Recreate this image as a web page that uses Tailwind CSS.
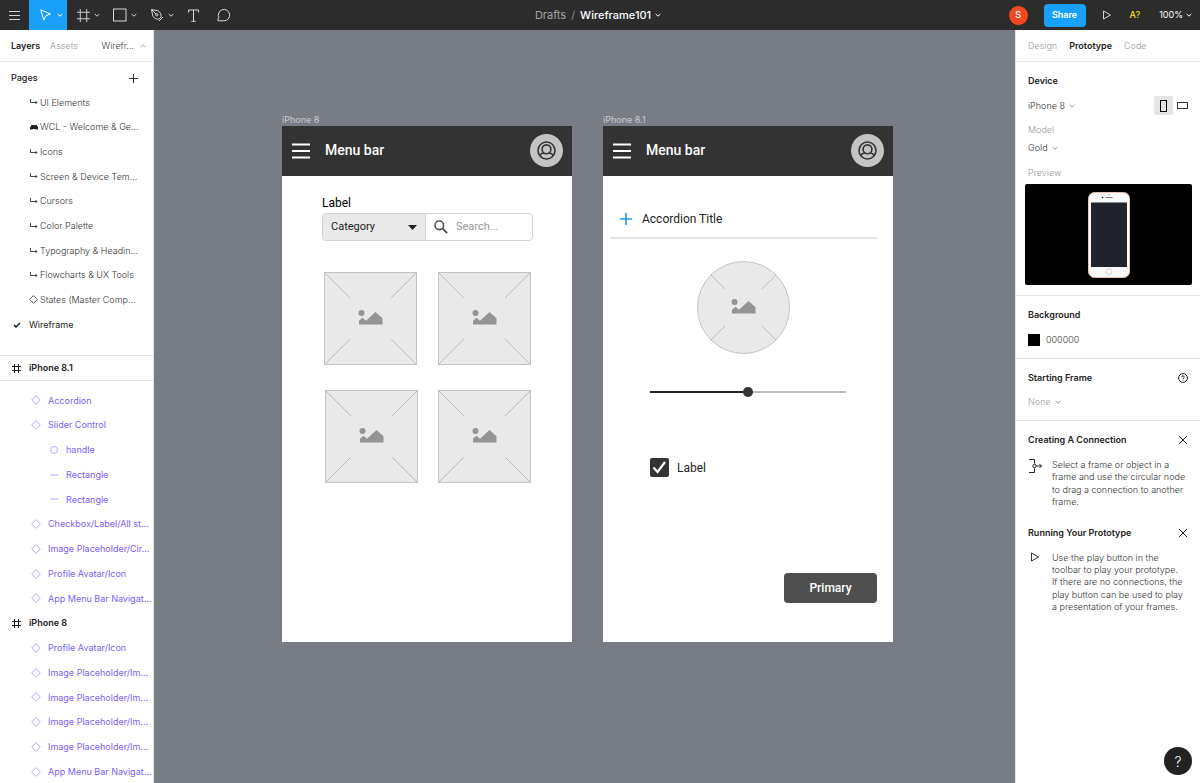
<!DOCTYPE html>
<html lang="en">
<head>
  <meta charset="UTF-8">
  <meta name="viewport" content="width=device-width, initial-scale=1.0">
  <title>Wireframe101</title>
  <script src="https://cdn.jsdelivr.net/npm/@tailwindcss/browser@4"></script>
</head>
<body class="h-screen flex flex-col overflow-hidden bg-[#787c85] font-['Inter',sans-serif] text-[9px] text-[#333]">

  <!-- Shared icons -->
  <svg class="hidden">
    <symbol id="chevron" viewBox="0 0 6 6"><path d="M.7 2 3 4.2 5.300 2" fill="none" stroke="currentColor"/></symbol>
    <symbol id="arrow" viewBox="0 0 8 8"><path d="M.5 1v3.500H7M5.500 3 7 4.500 5.500 6" fill="none" stroke="currentColor" stroke-width=".9"/></symbol>
    <symbol id="diamond" viewBox="0 0 10 10"><path d="M5 .7 9.300 5 5 9.300.7 5z" fill="none" stroke="currentColor" stroke-width=".9"/></symbol>
    <symbol id="frame" viewBox="0 0 14 14"><path d="M3.500 0v14M10.500 0v14M0 3.500h14M0 10.500h14" fill="none" stroke="currentColor"/></symbol>
    <symbol id="frame-small" viewBox="0 0 9 9"><path d="M2.500 0v9M6.500 0v9M0 2.500h9M0 6.500h9" fill="none" stroke="currentColor"/></symbol>
    <symbol id="close" viewBox="0 0 10 10"><path d="m1 1 8 8M9 1 1 9" fill="none" stroke="currentColor"/></symbol>
    <symbol id="play" viewBox="0 0 10 10"><path d="M1.500 1 8.500 5l-7 4z" fill="none" stroke="currentColor"/></symbol>
    <symbol id="burger" viewBox="0 0 18 16"><path d="M0 1.500h18M0 8h18M0 14.500h18" stroke="currentColor" stroke-width="2"/></symbol>
    <symbol id="avatar" viewBox="0 0 33 33">
      <circle cx="16.500" cy="16.500" r="16.500" fill="#c4c4c4"/>
      <g fill="none" stroke="#333" stroke-width="1.600">
        <circle cx="16.500" cy="16.500" r="8.500"/>
        <circle cx="16.500" cy="15.300" r="4.400"/>
        <path d="M9.800 21.500c1-1.600 2.300-2.400 4.200-2.700M23.200 21.500c-1-1.600-2.300-2.400-4.200-2.700"/>
      </g>
    </symbol>
    <symbol id="picture" viewBox="0 0 24 15"><circle cx="3" cy="3" r="3" fill="#949494"/><path d="M.5 14.500v-3.700L4 7.800l3.500 3L17 2l7 6.200v6.300z" fill="#949494"/></symbol>
    <symbol id="placeholder" viewBox="0 0 93 93">
      <rect x=".5" y=".5" width="92" height="92" fill="#e9e9e9" stroke="#c4c4c4"/>
      <path d="m1 1 25 25M92 1 67 26M1 92l25-25M92 92 67 67" stroke="#bdbdbd"/>
      <use href="#picture" x="34" y="38" width="25" height="15"/>
    </symbol>
  </svg>

  <!-- Toolbar -->
  <header class="h-[30px] shrink-0 grid grid-cols-[1fr_auto_1fr] items-center bg-[#2c2c2c] text-[#d6d6d6]">
    <div class="flex h-full">
      <button aria-label="Menu" class="w-[29px] flex items-center justify-center">
        <svg class="w-[11px] h-[11px]" viewBox="0 0 11 11"><path d="M0 1.500h11M0 5.500h11M0 9.500h11" stroke="currentColor"/></svg>
      </button>
      <button aria-label="Move" class="w-[38px] pl-[10px] flex items-center gap-1 bg-[#18a0fb] text-white">
        <svg class="size-[14px]" viewBox="0 0 14 14"><path d="M1.800 1.800 11.500 6 7 7.700 4.800 12z" fill="none" stroke="currentColor"/></svg>
        <svg class="size-[6px]"><use href="#chevron"/></svg>
      </button>
      <button aria-label="Frame" class="w-[37px] pl-[10px] flex items-center gap-1">
        <svg class="size-[13px]"><use href="#frame"/></svg>
        <svg class="size-[6px]"><use href="#chevron"/></svg>
      </button>
      <button aria-label="Shape" class="w-[37px] pl-[9px] flex items-center gap-1">
        <svg class="size-[14px]" viewBox="0 0 14 14"><rect x=".5" y="1" width="12.500" height="12" fill="none" stroke="currentColor"/></svg>
        <svg class="size-[6px]"><use href="#chevron"/></svg>
      </button>
      <button aria-label="Pen" class="w-[37px] pl-[9px] flex items-center gap-1">
        <svg class="size-[14px]" viewBox="0 0 14 14"><path d="M1.500 1.500 8 2.800c2.200 1.200 3.200 3.300 3.200 6L8.800 11.200c-2.700 0-4.800-1-6-3.200zM1.500 1.500 6 6M9 13l4-4" fill="none" stroke="currentColor"/><circle cx="6.800" cy="6.800" r="1.200" fill="none" stroke="currentColor"/></svg>
        <svg class="size-[6px]"><use href="#chevron"/></svg>
      </button>
      <button aria-label="Text" class="w-[30px] flex items-center justify-center">
        <svg class="size-[13px]" viewBox="0 0 13 13"><path d="M1.500 3.500v-2.500h10v2.500M6.500 1v11.500M4.300 12.300h4.400" fill="none" stroke="currentColor"/></svg>
      </button>
      <button aria-label="Comment" class="w-[31px] flex items-center justify-center">
        <svg class="size-[14px]" viewBox="0 0 14 14"><path d="M1 12.800V10.500L2 9.800a5.700 5.700 0 1 1 5 3z" fill="none" stroke="currentColor"/></svg>
      </button>
    </div>
    <div class="flex items-center gap-[5px] pr-1 text-[11px]">
      <a href="#" class="text-[#a3a3a3]">Drafts</a>
      <span class="text-[#8a8a8a]">/</span>
      <button class="flex items-center gap-1 font-medium text-white">Wireframe101 <svg class="size-[6px]"><use href="#chevron"/></svg></button>
    </div>
    <div class="flex items-center justify-end pr-2">
      <span class="size-[19px] rounded-full bg-[#f24822] text-white font-medium flex items-center justify-center mr-4">S</span>
      <button class="w-[42px] h-[23px] rounded bg-[#18a0fb] text-white font-semibold mr-4">Share</button>
      <button aria-label="Play" class="mr-[18px]"><svg class="size-[10px]"><use href="#play"/></svg></button>
      <button class="text-[#f5e50a] font-medium mr-[19px]">A?</button>
      <button class="flex items-center gap-[3px] text-white">100% <svg class="size-[6px]"><use href="#chevron"/></svg></button>
    </div>
  </header>

  <div class="flex flex-1 min-h-0">

    <!-- Layers panel -->
    <aside class="w-[154px] shrink-0 flex flex-col bg-white border-r border-[#e5e5e5] font-light overflow-hidden">
      <div class="h-8 shrink-0 flex items-center px-[11px] border-b border-[#e5e5e5]">
        <button class="font-semibold text-[#222]">Layers</button>
        <button class="ml-[10px] text-[#999]">Assets</button>
        <button class="ml-auto -mr-1 flex items-center gap-[6px]">Wirefr... <svg class="size-[6px] rotate-180 text-[#999]"><use href="#chevron"/></svg></button>
      </div>
      <div class="h-7 shrink-0 flex items-center justify-between pl-[11px] pr-[15px] pt-1">
        <h2 class="font-medium text-[#222]">Pages</h2>
        <button aria-label="Add page"><svg class="size-[9px]" viewBox="0 0 9 9"><path d="M4.500 0v9M0 4.500h9" stroke="currentColor"/></svg></button>
      </div>
      <ul class="h-[247px] shrink-0 grid auto-rows-fr items-center">
        <li class="flex items-center gap-[2px] pl-[30px]"><svg class="size-2"><use href="#arrow"/></svg>UI Elements</li>
        <li class="flex items-center gap-[2px] pl-[30px]"><svg class="size-2" viewBox="0 0 8 8"><path d="M0 4.500 1.500 2h2l.5.500.500-.5h2L8 4v2.500H5.500L5 6H3l-.5.500H0z" fill="#222"/></svg>WCL - Welcome &amp; Ge...</li>
        <li class="flex items-center gap-[2px] pl-[30px]"><svg class="size-2"><use href="#arrow"/></svg>Icons</li>
        <li class="flex items-center gap-[2px] pl-[30px]"><svg class="size-2"><use href="#arrow"/></svg>Screen &amp; Device Tem...</li>
        <li class="flex items-center gap-[2px] pl-[30px]"><svg class="size-2"><use href="#arrow"/></svg>Cursors</li>
        <li class="flex items-center gap-[2px] pl-[30px]"><svg class="size-2"><use href="#arrow"/></svg>Color Palette</li>
        <li class="flex items-center gap-[2px] pl-[30px]"><svg class="size-2"><use href="#arrow"/></svg>Typography &amp; Headin...</li>
        <li class="flex items-center gap-[2px] pl-[30px]"><svg class="size-2"><use href="#arrow"/></svg>Flowcharts &amp; UX Tools</li>
        <li class="flex items-center gap-[2px] pl-[29px]"><svg class="size-[9px]"><use href="#diamond"/></svg>States (Master Comp...</li>
        <li class="flex items-center gap-2 pl-[13px] font-normal text-[#222]"><svg class="size-2" viewBox="0 0 8 8"><path d="m1 4 2 2 4-4" fill="none" stroke="#111" stroke-width="1.400"/></svg>Wireframe</li>
      </ul>
      <div class="h-[26px] shrink-0 mt-[18px] flex items-center gap-2 pl-3 border-y border-[#e5e5e5] font-semibold text-[#222]">
        <svg class="size-[9px]"><use href="#frame-small"/></svg>iPhone 8.1
      </div>
      <ul class="h-[396px] shrink-0 mt-[7px] grid auto-rows-fr items-center text-[#7b61ff] font-normal">
        <li class="flex items-center gap-[7px] pl-[31px]"><svg class="size-[10px] opacity-60"><use href="#diamond"/></svg>Accordion</li>
        <li class="flex items-center gap-[7px] pl-[31px]"><svg class="size-[10px] opacity-60"><use href="#diamond"/></svg>Slider Control</li>
        <li class="flex items-center gap-2 pl-[50px]"><svg class="size-[8px] opacity-60" viewBox="0 0 8 8"><circle cx="4" cy="4" r="3.500" fill="none" stroke="currentColor" stroke-width=".9"/></svg>handle</li>
        <li class="flex items-center gap-2 pl-[50px]"><svg class="size-[8px] opacity-50" viewBox="0 0 8 8"><path d="M0 4h8" stroke="currentColor"/></svg>Rectangle</li>
        <li class="flex items-center gap-2 pl-[50px]"><svg class="size-[8px] opacity-50" viewBox="0 0 8 8"><path d="M0 4h8" stroke="currentColor"/></svg>Rectangle</li>
        <li class="flex items-center gap-[7px] pl-[31px]"><svg class="size-[10px] opacity-60"><use href="#diamond"/></svg>Checkbox/Label/All st...</li>
        <li class="flex items-center gap-[7px] pl-[31px]"><svg class="size-[10px] opacity-60"><use href="#diamond"/></svg>Image Placeholder/Cir...</li>
        <li class="flex items-center gap-[7px] pl-[31px]"><svg class="size-[10px] opacity-60"><use href="#diamond"/></svg>Profile Avatar/Icon</li>
        <li class="flex items-center gap-[7px] pl-[31px]"><svg class="size-[10px] opacity-60"><use href="#diamond"/></svg>App Menu Bar Navigat...</li>
        <li class="flex items-center gap-2 pl-3 font-semibold text-[#222]"><svg class="size-[9px]"><use href="#frame-small"/></svg>iPhone 8</li>
        <li class="flex items-center gap-[7px] pl-[31px]"><svg class="size-[10px] opacity-60"><use href="#diamond"/></svg>Profile Avatar/Icon</li>
        <li class="flex items-center gap-[7px] pl-[31px]"><svg class="size-[10px] opacity-60"><use href="#diamond"/></svg>Image Placeholder/Im...</li>
        <li class="flex items-center gap-[7px] pl-[31px]"><svg class="size-[10px] opacity-60"><use href="#diamond"/></svg>Image Placeholder/Im...</li>
        <li class="flex items-center gap-[7px] pl-[31px]"><svg class="size-[10px] opacity-60"><use href="#diamond"/></svg>Image Placeholder/Im...</li>
        <li class="flex items-center gap-[7px] pl-[31px]"><svg class="size-[10px] opacity-60"><use href="#diamond"/></svg>Image Placeholder/Im...</li>
        <li class="flex items-center gap-[7px] pl-[31px]"><svg class="size-[10px] opacity-60"><use href="#diamond"/></svg>App Menu Bar Navigat...</li>
      </ul>
    </aside>

    <!-- Canvas -->
    <main class="flex-1 min-w-0 flex items-start justify-center gap-[31px] pt-[84px] pl-[6px] overflow-hidden">

      <!-- iPhone 8 -->
      <section class="w-[290px] shrink-0">
        <h3 class="h-3 leading-3 text-[#c9cbcf]">iPhone 8</h3>
        <div class="h-[516px] bg-white font-['Roboto',sans-serif] text-[#222]">
          <div class="h-[50px] flex items-center pl-[10px] pr-[9px] pb-px bg-[#333] text-white">
            <svg class="w-[18px] h-4"><use href="#burger"/></svg>
            <span class="ml-[15px] text-[14px] font-medium">Menu bar</span>
            <svg class="size-[33px] ml-auto"><use href="#avatar"/></svg>
          </div>
          <div class="pl-10 pr-[39px] pt-5">
            <label for="search" class="block text-[12px] leading-[14px] text-black">Label</label>
            <div class="mt-[3px] h-7 flex rounded border border-[#d4d4d4] overflow-hidden">
              <div class="relative w-[103px] shrink-0 border-r border-[#d4d4d4]">
                <select aria-label="Category" class="appearance-none w-full h-full pl-2 bg-[#e9e9e9] text-[11px]">
                  <option>Category</option>
                </select>
                <svg class="absolute right-2 top-[11px] w-[9px] h-[5px] pointer-events-none" viewBox="0 0 9 5"><path d="M0 0h9L4.500 5z" fill="#222"/></svg>
              </div>
              <div class="flex flex-1 min-w-0 items-center gap-2 pl-2">
                <svg class="size-[14px] shrink-0" viewBox="0 0 14 14"><circle cx="5.300" cy="5.300" r="4.300" fill="none" stroke="#555" stroke-width="1.600"/><path d="m8.500 8.500 4.700 4.700" stroke="#555" stroke-width="1.900"/></svg>
                <input id="search" type="text" placeholder="Search..." class="w-full min-w-0 text-[11px] outline-none placeholder:text-[#999]">
              </div>
            </div>
          </div>
          <div class="grid grid-cols-[93px_93px] gap-x-5 gap-y-[25px] pl-[42px] pt-[31px]">
            <svg class="size-[93px]"><use href="#placeholder"/></svg>
            <svg class="size-[93px] ml-px"><use href="#placeholder"/></svg>
            <svg class="size-[93px] ml-px"><use href="#placeholder"/></svg>
            <svg class="size-[93px] ml-px"><use href="#placeholder"/></svg>
          </div>
        </div>
      </section>

      <!-- iPhone 8.1 -->
      <section class="w-[290px] shrink-0">
        <h3 class="h-3 leading-3 text-[#c9cbcf]">iPhone 8.1</h3>
        <div class="h-[516px] bg-white font-['Roboto',sans-serif] text-[#222]">
          <div class="h-[50px] flex items-center pl-[10px] pr-[9px] pb-px bg-[#333] text-white">
            <svg class="w-[18px] h-4"><use href="#burger"/></svg>
            <span class="ml-[15px] text-[14px] font-medium">Menu bar</span>
            <svg class="size-[33px] ml-auto"><use href="#avatar"/></svg>
          </div>
          <div class="ml-[7px] mr-4 mt-6 border-b-2 border-[#e3e3e3]">
            <button class="h-[37px] flex items-center gap-[10px] pl-[10px] text-[12px]">
              <svg class="size-3" viewBox="0 0 12 12"><path d="M6 0v12M0 6h12" stroke="#2196f3" stroke-width="1.600"/></svg>
              Accordion Title
            </button>
          </div>
          <svg class="size-[93px] ml-[94px] mt-[22px]" viewBox="0 0 93 93">
            <circle cx="46.500" cy="46.500" r="46" fill="#e9e9e9" stroke="#c4c4c4"/>
            <path d="m14 14 14 14M79 14 65 28M14 79l14-14M79 79 65 65" stroke="#bdbdbd"/>
            <use href="#picture" x="34" y="38" width="25" height="15"/>
          </svg>
          <input type="range" aria-label="Slider" value="50" class="block appearance-none w-[196px] h-[2px] ml-[47px] mt-[37px] bg-linear-to-r from-[#222] from-50% to-[#bdbdbd] to-50% [&::-webkit-slider-thumb]:appearance-none [&::-webkit-slider-thumb]:size-[10px] [&::-webkit-slider-thumb]:rounded-full [&::-webkit-slider-thumb]:bg-[#333]">
          <label class="flex items-center gap-2 ml-[47px] mt-[65px] h-[19px] text-[12px]">
            <span class="relative size-[19px]">
              <input type="checkbox" checked class="block appearance-none size-[19px] rounded-xs bg-[#333]">
              <svg class="absolute inset-0 size-[19px] pointer-events-none" viewBox="0 0 19 19"><path d="m3.500 9.500 4 4.500 7.500-10" fill="none" stroke="#fff" stroke-width="2.200"/></svg>
            </span>
            Label
          </label>
          <button class="block w-[93px] h-[30px] ml-auto mr-4 mt-24 rounded bg-[#4f4f4f] text-white text-[12px] font-medium">Primary</button>
        </div>
      </section>
    </main>

    <!-- Prototype panel -->
    <aside class="w-[185px] shrink-0 bg-white border-l border-[#e5e5e5] font-light overflow-hidden">
      <nav class="h-8 flex items-center gap-3 pl-3 border-b border-[#e5e5e5]">
        <button class="text-[#999]">Design</button>
        <button class="font-semibold text-[#222]">Prototype</button>
        <button class="text-[#999]">Code</button>
      </nav>

      <section class="h-[234px] pl-3 pt-3 border-b border-[#e5e5e5]">
        <h2 class="leading-[14px] font-semibold text-[#222]">Device</h2>
        <div class="mt-2 flex items-center h-[19px] pr-2">
          <button class="flex items-center gap-1">iPhone 8 <svg class="size-[6px] text-[#999]"><use href="#chevron"/></svg></button>
          <button aria-label="Portrait" class="ml-auto size-[19px] bg-[#e5e5e5] rounded-xs flex items-center justify-center"><span class="w-[7px] h-3 border border-black"></span></button>
          <button aria-label="Landscape" class="w-[19px] h-[19px] flex items-center justify-center"><span class="w-[11px] h-[7px] border border-[#333]"></span></button>
        </div>
        <p class="mt-2 leading-[14px] text-[#999]">Model</p>
        <button class="mt-1 h-[14px] flex items-center gap-1">Gold <svg class="size-[6px] text-[#999]"><use href="#chevron"/></svg></button>
        <p class="mt-[11px] leading-[14px] text-[#999]">Preview</p>
        <div class="-ml-[3px] mr-2 mt-1 h-[101px] rounded-xs bg-black flex items-center justify-center">
          <svg class="w-[42px] h-[86px]" viewBox="0 0 42 86">
            <rect x=".5" y=".5" width="41" height="85" rx="6" fill="#fafafa" stroke="#e9c3b0"/>
            <rect x="3" y="10.500" width="36" height="64.500" fill="#20232c"/>
            <path d="M17.500 5.500h7" stroke="#777"/>
            <circle cx="14.500" cy="5.500" r=".8" fill="#222"/>
            <circle cx="21" cy="2.800" r=".5" fill="#555"/>
            <circle cx="21" cy="79.500" r="3" fill="none" stroke="#e6c4b8" stroke-width=".8"/>
          </svg>
        </div>
      </section>

      <section class="h-[63px] pl-3 pt-3 border-b border-[#e5e5e5]">
        <h2 class="leading-[14px] font-semibold text-[#222]">Background</h2>
        <div class="mt-[11px] flex items-center gap-[6px]"><span class="size-3 bg-black"></span>000000</div>
      </section>

      <section class="h-[62px] pl-3 pt-3 border-b border-[#e5e5e5]">
        <h2 class="h-[14px] pr-3 flex items-center justify-between font-semibold text-[#222]">Starting Frame
          <svg class="size-[10px]" viewBox="0 0 10 10"><circle cx="5" cy="5" r="4.400" fill="none" stroke="#222"/><path d="M3.700 4.100c0-1.700 2.600-1.700 2.600 0C6.300 5 5 5 5 6M5 6.700v.9" fill="none" stroke="#222" stroke-width=".9"/></svg>
        </h2>
        <button class="mt-[10px] h-[14px] flex items-center gap-1 text-[#999]">None <svg class="size-[6px]"><use href="#chevron"/></svg></button>
      </section>

      <section class="pl-3 pr-3 pt-3">
        <div class="h-[14px] flex items-center justify-between font-semibold text-[#222]"><h2>Creating A Connection</h2>
          <button aria-label="Close"><svg class="size-[10px]"><use href="#close"/></svg></button>
        </div>
        <div class="mt-3 flex gap-[10px]">
          <svg class="w-[14px] h-[14px] shrink-0" viewBox="0 0 14 14"><path d="M1 .5h5.500v4M1 13.500h5.500v-4M8 7h5.500M11.500 5l2 2-2 2" fill="none" stroke="#222"/><circle cx="6.500" cy="7" r="1.700" fill="none" stroke="#222"/></svg>
          <p class="leading-snug">Select a frame or object in a<br>frame and use the circular node<br>to drag a connection to another<br>frame.</p>
        </div>
      </section>

      <section class="pl-3 pr-3 pt-[17px]">
        <div class="h-[14px] flex items-center justify-between font-semibold text-[#222]"><h2>Running Your Prototype</h2>
          <button aria-label="Close"><svg class="size-[10px]"><use href="#close"/></svg></button>
        </div>
        <div class="mt-3 flex gap-[10px]">
          <svg class="w-[14px] h-[10px] shrink-0"><use href="#play"/></svg>
          <p class="leading-snug">Use the play button in the<br>toolbar to play your prototype.<br>If there are no connections, the<br>play button can be used to play<br>a presentation of your frames.</p>
        </div>
      </section>
    </aside>
  </div>

  <!-- Help -->
  <button class="fixed right-2 bottom-2 size-7 rounded-full bg-[#222] text-white text-[14px] font-light">?</button>
</body>
</html>
